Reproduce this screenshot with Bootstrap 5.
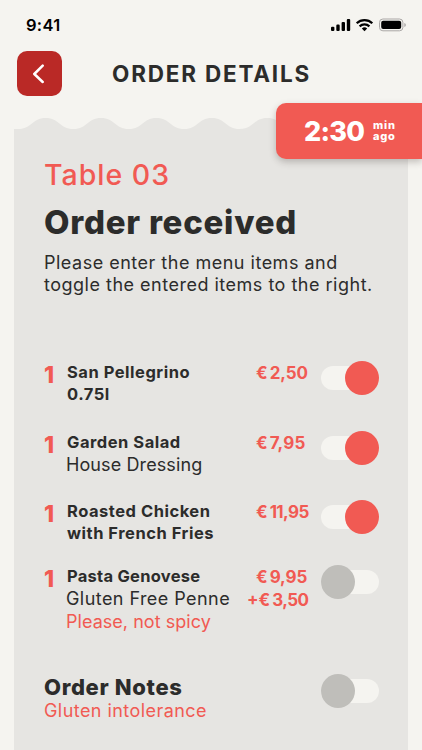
<!DOCTYPE html>
<html lang="en">
<head>
<meta charset="utf-8">
<meta name="viewport" content="width=device-width, initial-scale=1">
<title>Order details</title>
<link href="https://cdn.jsdelivr.net/npm/bootstrap@5.3.0/dist/css/bootstrap.min.css" rel="stylesheet">
<style>
:root{--coral:#f15a53;--ink:#2c2c2b;--page:#f5f4f0;--paper:#e6e5e2}
body{background:var(--page);color:var(--ink);font-family:Inter,"Open Sans",sans-serif;height:750px;overflow:hidden}
.coral{color:var(--coral)}
.status{height:51px;padding:0 15px 1px 26px;color:#000}
.clock{font-size:16.5px;font-weight:600;letter-spacing:.3px;line-height:1}
.topbar{height:45px;padding-left:17px}
.back{width:45px;height:45px;border-radius:10px;background:#ba2926;border:0}
.screen-title{font-size:22.5px;font-weight:700;letter-spacing:1.8px;line-height:1;margin:0 0 0 50px;padding-top:2px}
.paper{margin:22px 14.5px 0 14px;height:632px}
.wave{height:11px;fill:var(--paper)}
.sheet{background:var(--paper);height:630px;padding:28px 28.5px 0 30px}
.timer{right:0;top:102.5px;width:146px;height:56.5px;border-radius:10px 0 0 10px;background:var(--coral);box-shadow:0 3px 7px rgba(60,50,45,.28);padding:1px 0 0 28px;gap:8px}
.timer-value{font-size:27px;font-weight:800;letter-spacing:-.75px;line-height:1;width:61px}
.timer-unit{font-size:11px;font-weight:800;letter-spacing:.8px;line-height:11.5px}
.timer-unit span{height:11.5px}
.table-name{font-size:28.5px;font-weight:500;letter-spacing:1px;line-height:36px}
.headline{font-size:33px;font-weight:800;letter-spacing:.75px;line-height:40px;margin-top:9px}
.intro{font-size:18px;letter-spacing:.5px;line-height:21.5px;margin-top:10px}
.orders{margin-top:66px}
.order{display:grid;grid-template-columns:22px 1fr auto;height:69.5px}
.order.short{height:64.5px}
.order.tall{height:109px}
.qty{font-size:23px;font-weight:800;line-height:25px;padding-top:2px}
.dish{font-size:16.5px;font-weight:700;letter-spacing:.52px;line-height:21.5px;padding:1px 0 0 1px}
.dish.snug{letter-spacing:.26px}
.extra{font-size:18px;letter-spacing:.44px;line-height:22.5px;padding-top:.5px}
.extra.snug{letter-spacing:.1px}
.extra.tight{letter-spacing:.04px}
.price{font-size:17px;font-weight:700;line-height:23.5px;width:74px;padding-top:1px}
.price div{padding-left:9px}
.price .plus{padding-left:0}
.amount{margin-left:2px;letter-spacing:-.1px}
.amount.wide{letter-spacing:.2px}
.amount.narrow{letter-spacing:-.6px}
.switch{width:58px;height:34px;flex:none;border:0;background:none;padding:0}
.switch .track{height:24px;background:var(--page);border-radius:12px;width:58px;display:flex;align-items:center}
.switch .knob{width:34px;height:34px;border-radius:50%;background:#bfbeba;flex:none}
.switch.on .knob{background:var(--coral)}
.switch.on .track{justify-content:flex-end}
.notes-title{font-size:22px;font-weight:800;letter-spacing:.65px;line-height:26px}
</style>
<script src="https://cdn.jsdelivr.net/npm/bootstrap@5.3.0/dist/js/bootstrap.bundle.min.js"></script>
</head>
<body>
<div class="status d-flex justify-content-between align-items-center">
  <span class="clock">9:41</span>
  <svg width="76" height="14" viewBox="0 0 76 14" aria-hidden="true">
    <rect x="0" y="8.7" width="3.4" height="4.3" rx="1.1"/><rect x="5.3" y="6.6" width="3.4" height="6.4" rx="1.1"/><rect x="10.6" y="3.9" width="3.4" height="9.1" rx="1.1"/><rect x="15.8" y="1" width="3.4" height="12" rx="1.1"/>
    <g fill="none" stroke="#000" stroke-width="2.2"><path d="M25.7 5.3a11.2 11.2 0 0 1 15.6 0"/><path d="M28.6 8.4a7.1 7.1 0 0 1 9.8 0"/></g><path d="M30.8 10.5a4 4 0 0 1 5.4 0l-2.7 2.7z"/>
    <rect x="48.5" y="1" width="23.4" height="11.8" rx="3.4" fill="none" stroke="#aaa7a6"/><rect x="50.2" y="2.7" width="20" height="8.4" rx="2"/><path d="M73.3 5q1.6.5 1.6 2t-1.6 2z" fill="#aaa7a6"/>
  </svg>
</div>
<header class="topbar d-flex align-items-center">
  <button class="back d-flex align-items-center justify-content-center p-0" aria-label="Back"><svg width="13" height="20" viewBox="0 0 13 20" fill="none" stroke="#fff" stroke-width="2.5" stroke-linecap="round" stroke-linejoin="round"><path d="M9.7 1.7 1.3 10l8.4 8"/></svg></button>
  <h1 class="screen-title">ORDER DETAILS</h1>
</header>
<div class="timer position-absolute d-flex align-items-center text-white">
  <span class="timer-value">2:30</span><div class="timer-unit d-flex flex-column"><span>min</span><span>ago</span></div>
</div>
<main class="paper">
  <svg class="wave d-block w-100" viewBox="0 0 393.5 11" preserveAspectRatio="none"><path d="M0 11H4C18 11 18 0 31.7 0S45.5 11 59.4 11S73.2 0 87 0S100.9 11 114.8 11S128.6 0 142.4 0S156.3 11 170.2 11S184 0 197.8 0S211.7 11 225.6 11S239.4 0 253.2 0S267 11 281 11H393.5V11.1H0z"/></svg>
  <div class="sheet">
    <div class="table-name coral">Table 03</div>
    <h2 class="headline mb-0">Order received</h2>
    <p class="intro mb-0">Please enter the menu items and<br>toggle the entered items to the right.</p>
    <div class="orders">
      <div class="order">
        <div class="qty coral">1</div><div class="dish">San Pellegrino<br>0.75l</div>
        <div class="d-flex align-items-start"><div class="price coral"><div>€<span class="amount">2,50</span></div></div><button class="switch on" role="switch" aria-checked="true" aria-label="San Pellegrino"><span class="track"><span class="knob"></span></span></button></div>
      </div>
      <div class="order">
        <div class="qty coral">1</div><div><div class="dish">Garden Salad</div><div class="extra snug">House Dressing</div></div>
        <div class="d-flex align-items-start"><div class="price coral"><div>€<span class="amount wide">7,95</span></div></div><button class="switch on" role="switch" aria-checked="true" aria-label="Garden Salad"><span class="track"><span class="knob"></span></span></button></div>
      </div>
      <div class="order short">
        <div class="qty coral">1</div><div class="dish">Roasted Chicken<br>with French Fries</div>
        <div class="d-flex align-items-start"><div class="price coral"><div>€<span class="amount narrow">11,95</span></div></div><button class="switch on" role="switch" aria-checked="true" aria-label="Roasted Chicken"><span class="track"><span class="knob"></span></span></button></div>
      </div>
      <div class="order tall">
        <div class="qty coral">1</div><div class="text-nowrap"><div class="dish snug">Pasta Genovese</div><div class="extra">Gluten Free Penne</div><div class="extra tight coral">Please, not spicy</div></div>
        <div class="d-flex align-items-start"><div class="price coral"><div>€<span class="amount">9,95</span></div><div class="plus">+€<span class="amount narrow">3,50</span></div></div><button class="switch" role="switch" aria-checked="false" aria-label="Pasta Genovese"><span class="track"><span class="knob"></span></span></button></div>
      </div>
      <div class="d-flex justify-content-between align-items-start">
        <div><div class="notes-title">Order Notes</div><div class="extra coral">Gluten intolerance</div></div>
        <button class="switch" role="switch" aria-checked="false" aria-label="Order notes"><span class="track"><span class="knob"></span></span></button>
      </div>
    </div>
  </div>
</main>
</body>
</html>
